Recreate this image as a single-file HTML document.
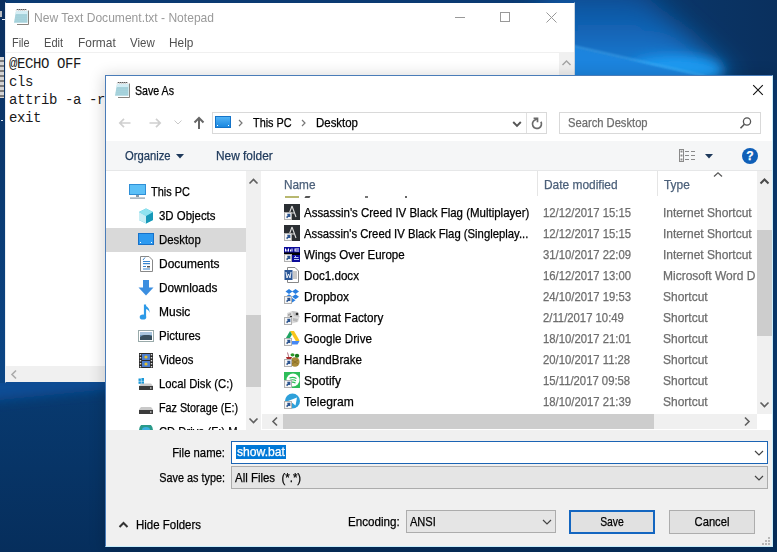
<!DOCTYPE html>
<html><head><meta charset="utf-8">
<style>
*{margin:0;padding:0;box-sizing:border-box}
html,body{width:777px;height:552px;overflow:hidden}
body{position:relative;font-family:"Liberation Sans",sans-serif;font-size:11.5px;color:#000;
background:#08306a;}
.a{position:absolute}
.t{position:absolute;white-space:nowrap;line-height:14px;-webkit-text-stroke:0.25px currentColor}

/* notepad */
#np{left:5px;top:2px;width:570px;height:381px;background:#fff;background-clip:padding-box;border:1px solid transparent;border-left-color:#e8eef4;border-right-color:#c8d4e0}
#np .title{left:28px;top:8px;color:#9a9a9a;font-size:12px;-webkit-text-stroke:0}
.menu{color:#505050;font-size:11.6px;-webkit-text-stroke:0}
.code{-webkit-text-stroke:0;font-family:"Liberation Mono",monospace;font-size:14px;letter-spacing:-0.4px;line-height:18px;color:#1a1a1a}
</style></head>
<body>
<svg id="wall" class="a" style="left:0;top:0" width="777" height="552" viewBox="0 0 777 552">
 <defs>
  <filter id="b15" x="-50%" y="-50%" width="200%" height="200%"><feGaussianBlur stdDeviation="14"/></filter>
  <filter id="b6" x="-50%" y="-50%" width="200%" height="200%"><feGaussianBlur stdDeviation="6"/></filter>
  <filter id="b1" x="-50%" y="-50%" width="200%" height="200%"><feGaussianBlur stdDeviation="1.2"/></filter>
  <linearGradient id="gtop" x1="0" y1="0" x2="1" y2="0"><stop offset="0" stop-color="#0c3f7c"/><stop offset=".5" stop-color="#0a3668"/><stop offset="1" stop-color="#0a305e"/></linearGradient>
 </defs>
 <linearGradient id="gbase" x1="0" y1="0" x2="0" y2="1"><stop offset="0" stop-color="#0a3a72"/><stop offset=".7" stop-color="#083a70"/><stop offset="1" stop-color="#062e5c"/></linearGradient><rect width="777" height="552" fill="url(#gbase)"/>
 <rect x="560" y="0" width="217" height="80" fill="url(#gtop)"/>
 <linearGradient id="gbr" x1="0" y1="0" x2="0" y2="1"><stop offset="0" stop-color="#0f4f98"/><stop offset=".5" stop-color="#1266b8"/><stop offset="1" stop-color="#1688e4"/></linearGradient>
 <polygon points="540,-10 640,-10 735,82 540,82" fill="url(#gbr)" filter="url(#b15)"/>
 <ellipse cx="675" cy="70" rx="48" ry="14" fill="#1e9cf4" filter="url(#b6)"/>
 <polygon points="560,44 700,76 560,82" fill="#1a84de" filter="url(#b1)"/>
 <path d="M560 43 L705 76" stroke="#58b8f8" stroke-width="1.4" stroke-opacity=".6" filter="url(#b1)"/>
 <polygon points="-20,375 120,375 120,388 -20,402" fill="#0c4e96" filter="url(#b6)"/>
 <linearGradient id="gleft" x1="0" y1="0" x2="0" y2="1"><stop offset="0" stop-color="#0b2f5e"/><stop offset=".5" stop-color="#0a3a72"/><stop offset="1" stop-color="#0b4686"/></linearGradient><rect x="0" y="0" width="6" height="383" fill="url(#gleft)"/>
</svg>

<div class="a" style="left:0;top:11px;width:2px;height:6px;background:#b8bcc0"></div>
<div class="a" style="left:2px;top:19px;width:3px;height:1px;background:#e8eef8"></div>
<div class="a" style="left:0;top:57px;width:4px;height:41px;background:repeating-linear-gradient(#d4d4d4 0 3px,#7a7a7a 3px 5px)"></div>
<div class="a" style="left:1px;top:120px;width:2px;height:1px;background:#dfe8f0"></div>
<!-- Notepad -->
<div id="np" class="a">
  <!-- icon -->
  <svg class="a" style="left:5px;top:4px" width="18" height="18" viewBox="0 0 18 18">
  <path d="M6 3.5 H17.5 V17.5 H6 Z" fill="#fff"/><path d="M6 17.5 H17.5 V3.5" fill="none" stroke="#7a7670" stroke-width="0.9"/>
  <path d="M5 4 L16.5 4 L16.5 15.8 L3 15.8 Z" fill="#a6d3dc"/>
  <path d="M5 4 L16.5 4 L16.5 7 L4.6 7 Z" fill="#d4edf4"/>
  <g stroke="#a4cdd9" stroke-width=".5"><path d="M4.5 8.5 H16 M4.2 10.5 H16 M3.9 12.5 H16 M3.6 14.5 H16"/></g>
  <path d="M5.5 3.2 l1 -1 l1 1 l1 -1 l1 1 l1 -1 l1 1 l1 -1 l1 1 l1 -1 l1 1" fill="none" stroke="#333" stroke-width="1"/>
</svg>
  <div class="t title" style="font-size:12.2px;transform:scaleX(0.9890);transform-origin:0 0">New Text Document.txt - Notepad</div>
  <div class="a" style="left:449px;top:14px;width:10px;height:1px;background:#999"></div>
  <div class="a" style="left:494px;top:9px;width:10px;height:10px;border:1px solid #999"></div>
  <svg class="a" style="left:540px;top:9px" width="11" height="11"><path d="M0.5 0.5 L10.5 10.5 M10.5 0.5 L0.5 10.5" stroke="#999" stroke-width="1"/></svg>
  <div class="t menu" style="left:6px;top:33px;font-size:12.2px;transform:scaleX(0.8961);transform-origin:0 0">File</div>
  <div class="t menu" style="left:38px;top:33px;font-size:12.2px;transform:scaleX(0.9088);transform-origin:0 0">Edit</div>
  <div class="t menu" style="left:72px;top:33px;font-size:12.2px;transform:scaleX(0.9764);transform-origin:0 0">Format</div>
  <div class="t menu" style="left:124px;top:33px;font-size:12.2px;transform:scaleX(0.9426);transform-origin:0 0">View</div>
  <div class="t menu" style="left:163px;top:33px;font-size:12.2px;transform:scaleX(0.9730);transform-origin:0 0">Help</div>
  <div class="a" style="left:0;top:49px;width:568px;height:1px;background:#f0f0f0"></div>
  <div class="t code" style="left:3px;top:52px">@ECHO OFF<br>cls<br>attrib -a -r<br>exit</div>
  <!-- v scrollbar -->
  <div class="a" style="left:553px;top:50px;width:15px;height:314px;background:#f0f0f0"></div>
  <svg class="a" style="left:555px;top:56px" width="11" height="8"><path d="M1.5 6 L5.5 2 L9.5 6" stroke="#a3a3a3" stroke-width="1.4" fill="none"/></svg>
  <!-- h scrollbar -->
  <div class="a" style="left:0;top:363px;width:568px;height:16px;background:#f0f0f0"></div>
  <svg class="a" style="left:4px;top:366px" width="8" height="11"><path d="M6 1.5 L2 5.5 L6 9.5" stroke="#ababab" stroke-width="1.6" fill="none"/></svg>
</div>


<!-- Save As dialog -->
<div class="a" style="left:105px;top:75px;width:668px;height:472px;background:#fff;border:1px solid #4a7cb8;border-right-color:#c8eefc;border-bottom-color:#c8eefc;box-shadow:0 2px 14px 2px rgba(0,0,0,.16)"></div>
<svg class="a" style="left:112px;top:80px" width="18" height="18" viewBox="0 0 18 18">
  <path d="M6 3.5 H17.5 V17.5 H6 Z" fill="#fff"/><path d="M6 17.5 H17.5 V3.5" fill="none" stroke="#7a7670" stroke-width="0.9"/>
  <path d="M5 4 L16.5 4 L16.5 15.8 L3 15.8 Z" fill="#a6d3dc"/>
  <path d="M5 4 L16.5 4 L16.5 7 L4.6 7 Z" fill="#d4edf4"/>
  <g stroke="#a4cdd9" stroke-width=".5"><path d="M4.5 8.5 H16 M4.2 10.5 H16 M3.9 12.5 H16 M3.6 14.5 H16"/></g>
  <path d="M5.5 3.2 l1 -1 l1 1 l1 -1 l1 1 l1 -1 l1 1 l1 -1 l1 1 l1 -1 l1 1" fill="none" stroke="#333" stroke-width="1"/>
</svg>
<div class="t" style="left:135px;top:84px;color:#000;font-size:12.2px;transform:scaleX(0.8721);transform-origin:0 0">Save As</div>
<svg class="a" style="left:752px;top:84px" width="12" height="12"><path d="M1.2 1.2 L10.8 10.8 M10.8 1.2 L1.2 10.8" stroke="#111" stroke-width="1.1"/></svg>

<!-- nav buttons -->
<svg class="a" style="left:118px;top:117px" width="14" height="12"><path d="M1.8 6 H12.5 M6 1.8 L1.8 6 L6 10.2" stroke="#cfcfcf" stroke-width="1.7" fill="none"/></svg>
<svg class="a" style="left:148px;top:117px" width="14" height="12"><path d="M1.5 6 H12.2 M8 1.8 L12.2 6 L8 10.2" stroke="#cfcfcf" stroke-width="1.7" fill="none"/></svg>
<svg class="a" style="left:174px;top:120px" width="8" height="5"><path d="M0.5 0.5 L4 4 L7.5 0.5" stroke="#c9c9c9" stroke-width="1" fill="none"/></svg>
<svg class="a" style="left:193px;top:116px" width="12" height="14"><path d="M6 2 V13 M1.5 6.5 L6 2 L10.5 6.5" stroke="#666" stroke-width="2" fill="none"/></svg>

<!-- address bar -->
<div class="a" style="left:212px;top:112px;width:335px;height:22px;border:1px solid #d9d9d9;background:#fff"></div>
<div class="a" style="left:215px;top:116px;width:16px;height:12px;background:linear-gradient(#52b3f5,#1a87e0);border:1px solid #1473c8"></div>
<div class="a" style="left:217px;top:125px;width:1px;height:1px;background:#fff"></div>
<div class="a" style="left:228px;top:125px;width:1px;height:1px;background:#fff"></div>
<svg class="a" style="left:238px;top:119px" width="5" height="8"><path d="M1 1 L4 4 L1 7" stroke="#777" stroke-width="1.2" fill="none"/></svg>
<div class="t" style="left:253px;top:116px;font-size:12.2px;transform:scaleX(0.8906);transform-origin:0 0">This PC</div>
<svg class="a" style="left:301px;top:119px" width="5" height="8"><path d="M1 1 L4 4 L1 7" stroke="#777" stroke-width="1.2" fill="none"/></svg>
<div class="t" style="left:316px;top:116px;font-size:12.2px;transform:scaleX(0.9392);transform-origin:0 0">Desktop</div>
<svg class="a" style="left:512px;top:120px" width="10" height="8"><path d="M1.2 2 L5 5.8 L8.8 2" stroke="#555" stroke-width="1.9" fill="none"/></svg>
<div class="a" style="left:526px;top:113px;width:1px;height:20px;background:#e0e0e0"></div>
<svg class="a" style="left:529px;top:116px" width="16" height="16" viewBox="0 0 16 16"><path d="M11.9 5.75 A4.5 4.5 0 1 1 6 3.9 L8.3 2.5" stroke="#6a6a6a" stroke-width="1.7" fill="none"/><path d="M4.6 2.3 H8.5 V6.2" stroke="#6a6a6a" stroke-width="1.7" fill="none"/></svg>

<!-- search -->
<div class="a" style="left:559px;top:112px;width:202px;height:22px;border:1px solid #d9d9d9;background:#fff"></div>
<div class="t" style="left:568px;top:116px;color:#6d6d6d;font-size:12.2px;transform:scaleX(0.9179);transform-origin:0 0">Search Desktop</div>
<svg class="a" style="left:739px;top:116px" width="14" height="14" viewBox="0 0 14 14"><circle cx="8" cy="5.5" r="3.6" stroke="#555" stroke-width="1.3" fill="none"/><path d="M5.4 8.2 L1.5 12.2" stroke="#555" stroke-width="1.6"/></svg>

<!-- command bar -->
<div class="a" style="left:106px;top:141px;width:666px;height:30px;background:#f5f6f7;border-bottom:1px solid #e6e7e8"></div>
<div class="t" style="left:125px;top:149px;color:#1e395b;font-size:12.2px;transform:scaleX(0.9221);transform-origin:0 0">Organize</div>
<svg class="a" style="left:176px;top:154px" width="8" height="5"><path d="M0 0 H8 L4 4.5 Z" fill="#1e395b"/></svg>
<div class="t" style="left:216px;top:149px;color:#1e395b;font-size:12.2px;transform:scaleX(0.9748);transform-origin:0 0">New folder</div>
<svg class="a" style="left:679px;top:149px" width="17" height="13" viewBox="0 0 17 13">
 <rect x="0.5" y="0.5" width="4" height="12" fill="#fff" stroke="#8a8a8a"/>
 <g fill="#8a8a8a"><rect x="1.5" y="1.5" width="2" height="2"/><rect x="1.5" y="5.5" width="2" height="2"/><rect x="1.5" y="9.5" width="2" height="2"/>
 <rect x="6" y="2" width="4" height="1"/><rect x="6" y="6" width="4" height="1"/><rect x="6" y="10" width="4" height="1"/><rect x="12" y="2" width="4" height="1"/><rect x="12" y="6" width="4" height="1"/><rect x="12" y="10" width="4" height="1"/></g>
</svg>
<svg class="a" style="left:705px;top:154px" width="8" height="5"><path d="M0 0 H8 L4 4.5 Z" fill="#1e395b"/></svg>
<div class="a" style="left:742px;top:148px;width:16px;height:16px;border-radius:50%;background:#0f5fb8"></div>
<div class="t" style="left:742px;top:149px;width:16px;text-align:center;color:#fff;font-weight:bold;font-size:12px">?</div>
<div class="a" style="left:106px;top:171px;width:140px;height:259px;background:#fff"></div>
<div class="a" style="left:246px;top:171px;width:15px;height:259px;background:#f0f0f0"></div>
<div class="a" style="left:246px;top:315px;width:15px;height:72px;background:#cdcdcd"></div>
<svg class="a" style="left:248px;top:177px" width="11" height="8"><path d="M1.5 6.5 L5.5 2.5 L9.5 6.5" stroke="#606060" stroke-width="1.6" fill="none"/></svg>
<svg class="a" style="left:248px;top:417px" width="11" height="8"><path d="M1.5 1.5 L5.5 5.5 L9.5 1.5" stroke="#606060" stroke-width="1.6" fill="none"/></svg>
<div class="a" style="left:106px;top:228px;width:140px;height:24px;background:#d9d9d9"></div>
<div class="t" style="left:151px;top:185px;font-size:12.2px;transform:scaleX(0.8952);transform-origin:0 0">This PC</div>
<div class="t" style="left:159px;top:209px;font-size:12.2px;transform:scaleX(0.9370);transform-origin:0 0">3D Objects</div>
<div class="t" style="left:159px;top:233px;font-size:12.2px;transform:scaleX(0.9347);transform-origin:0 0">Desktop</div>
<div class="t" style="left:159px;top:257px;font-size:12.2px;transform:scaleX(0.9815);transform-origin:0 0">Documents</div>
<div class="t" style="left:159px;top:281px;font-size:12.2px;transform:scaleX(0.9685);transform-origin:0 0">Downloads</div>
<div class="t" style="left:159px;top:305px;font-size:12.2px;transform:scaleX(0.9834);transform-origin:0 0">Music</div>
<div class="t" style="left:159px;top:329px;font-size:12.2px;transform:scaleX(0.9448);transform-origin:0 0">Pictures</div>
<div class="t" style="left:159px;top:353px;font-size:12.2px;transform:scaleX(0.9259);transform-origin:0 0">Videos</div>
<div class="t" style="left:159px;top:377px;font-size:12.2px;transform:scaleX(0.9272);transform-origin:0 0">Local Disk (C:)</div>
<div class="t" style="left:159px;top:401px;font-size:12.2px;transform:scaleX(0.8835);transform-origin:0 0">Faz Storage (E:)</div>
<div class="t" style="left:159px;top:425px;font-size:12.2px;transform:scaleX(0.9200);transform-origin:0 0">CD Drive (F:) M</div>
<svg class="a" style="left:129px;top:184px" width="18" height="16" viewBox="0 0 18 16"><rect x="0.5" y="0.5" width="16" height="10" fill="#5cc0f7" stroke="#2f8fd6"/><rect x="7" y="11" width="3" height="2" fill="#8a9aa8"/><rect x="1" y="13.5" width="15" height="1.2" fill="#8a9aa8"/></svg>
<svg class="a" style="left:138px;top:208px" width="16" height="16" viewBox="0 0 16 16"><path d="M8 0.5 L15 4 L15 12 L8 15.5 L1 12 L1 4 Z" fill="#39c0d8"/><path d="M8 8 L15 4 L15 12 L8 15.5 Z" fill="#1798b8"/><path d="M1 4 L8 8 L15 4 L8 0.5 Z" fill="#8fe3f0"/><path d="M1 4 L8 8 L8 15.5 L1 12 Z" fill="#c7eef5"/></svg>
<svg class="a" style="left:138px;top:233px" width="16" height="14" viewBox="0 0 16 14"><rect x="0.5" y="0.5" width="15" height="11" fill="#2d9af0" stroke="#1771c9"/><rect x="2" y="9" width="1" height="1" fill="#fff"/><rect x="13" y="9" width="1" height="1" fill="#fff"/></svg>
<svg class="a" style="left:140px;top:256px" width="13" height="16" viewBox="0 0 13 16"><path d="M0.5 0.5 H9 L12.5 4 V15.5 H0.5 Z" fill="#fff" stroke="#888"/><g fill="#3a86d0"><rect x="3" y="5" width="7" height="1"/><rect x="3" y="7" width="7" height="1.2"/><rect x="3" y="10" width="3" height="1"/><rect x="7" y="10" width="3" height="1.5" fill="#555"/><rect x="3" y="12.5" width="7" height="1"/></g><path d="M3 4 L5 1.5" stroke="#3a86d0"/></svg>
<svg class="a" style="left:138px;top:280px" width="16" height="16" viewBox="0 0 16 16"><path d="M5 0 H11 V7.5 H15.5 L8 15.5 L0.5 7.5 H5 Z" fill="#3b8ee0"/></svg>
<svg class="a" style="left:139px;top:304px" width="14" height="16" viewBox="0 0 14 16"><path d="M6 0.5 L6 12" stroke="#2d9ae8" stroke-width="2.2"/><ellipse cx="4" cy="13" rx="3.3" ry="2.6" fill="#2d9ae8"/><path d="M6 1 C8 3 11 4 10.5 9 C10 6 8 5 6.5 5" fill="#2d9ae8"/></svg>
<svg class="a" style="left:138px;top:330px" width="16" height="12" viewBox="0 0 16 12"><rect x="0.5" y="0.5" width="15" height="11" fill="#fff" stroke="#9aa"/><rect x="2" y="2" width="12" height="8" fill="#6a94b8"/><path d="M2 7 Q7 3 14 6 V10 H2 Z" fill="#38505e"/><rect x="2" y="2" width="12" height="3" fill="#a8c4dc"/></svg>
<svg class="a" style="left:139px;top:353px" width="14" height="15" viewBox="0 0 14 15"><rect x="0" y="0" width="14" height="15" fill="#2a2a2a"/><rect x="3" y="1" width="8" height="6" fill="#4c7ed0"/><rect x="3" y="8" width="8" height="6" fill="#4c7ed0"/><circle cx="7" cy="4" r="1.6" fill="#e0c030"/><circle cx="7" cy="11" r="1.6" fill="#e0c030"/><g fill="#ddd"><rect x="0.8" y="1" width="1.4" height="1.4"/><rect x="0.8" y="4" width="1.4" height="1.4"/><rect x="0.8" y="7" width="1.4" height="1.4"/><rect x="0.8" y="10" width="1.4" height="1.4"/><rect x="0.8" y="13" width="1.4" height="1.4"/><rect x="11.8" y="1" width="1.4" height="1.4"/><rect x="11.8" y="4" width="1.4" height="1.4"/><rect x="11.8" y="7" width="1.4" height="1.4"/><rect x="11.8" y="10" width="1.4" height="1.4"/><rect x="11.8" y="13" width="1.4" height="1.4"/></g></svg>
<svg class="a" style="left:138px;top:377px" width="16" height="14" viewBox="0 0 16 14"><g fill="#1a98d8"><rect x="0.5" y="1.5" width="2.4" height="2.4"/><rect x="3.4" y="1" width="2.6" height="2.9"/><rect x="0.5" y="4.4" width="2.4" height="2.4"/><rect x="3.4" y="4.4" width="2.6" height="2.6"/></g><path d="M3 6.5 H13 L15 9 V13 H1 V9 Z" fill="#c9c9c9"/><rect x="1" y="9" width="14" height="4" fill="#3b3b3b"/><rect x="12" y="10.5" width="1.5" height="1" fill="#fff"/></svg>
<svg class="a" style="left:138px;top:401px" width="16" height="14" viewBox="0 0 16 14"><path d="M3 6 H13 L15 8.5 V13 H1 V8.5 Z" fill="#c9c9c9"/><rect x="1" y="9" width="14" height="4" fill="#3b3b3b"/><rect x="12" y="10.5" width="1.5" height="1" fill="#fff"/></svg>
<svg class="a" style="left:138px;top:425px" width="16" height="5" viewBox="0 0 16 5"><path d="M1 5 A7 7 0 0 1 15 5 Z" fill="#2a9a8a"/><path d="M4 5 A4 3 0 0 1 12 5 Z" fill="#3cb0e0"/></svg>
<div class="a" style="left:261px;top:171px;width:496px;height:243px;background:#fff"></div>

<div class="a" style="left:262px;top:171px;width:495px;height:26px;background:#fff"></div>
<div class="t" style="left:284px;top:178px;color:#4c607a;font-size:12.2px;transform:scaleX(0.9688);transform-origin:0 0">Name</div>
<div class="a" style="left:537px;top:171px;width:1px;height:26px;background:#e5e5e5"></div>
<div class="t" style="left:544px;top:178px;color:#4c607a;font-size:12.2px;transform:scaleX(0.9787);transform-origin:0 0">Date modified</div>
<div class="a" style="left:657px;top:171px;width:1px;height:26px;background:#e5e5e5"></div>
<div class="t" style="left:664px;top:178px;color:#4c607a;font-size:12.2px;transform:scaleX(0.9765);transform-origin:0 0">Type</div>
<div class="a" style="left:262px;top:196px;width:495px;height:3px;overflow:hidden;background:#fff"><div class="a" style="left:43px;top:0;width:5px;height:2px;background:#555;transform:skewX(-30deg)"></div><div class="a" style="left:103px;top:0;width:3px;height:2px;background:#777"></div><div class="a" style="left:143px;top:0;width:2px;height:2px;background:#666"></div><div class="a" style="left:24px;top:1px;width:1px;height:0"></div><div class="a" style="left:23px;top:0;width:14px;height:2px;background:#b8b870"></div></div>
<svg class="a" style="left:713px;top:171px" width="10" height="7"><path d="M1 5.5 L5 1.8 L9 5.5" stroke="#5a5a5a" stroke-width="1.3" fill="none"/></svg>
<div class="t" style="left:304px;top:206px;font-size:12.2px;transform:scaleX(0.9411);transform-origin:0 0">Assassin's Creed IV Black Flag (Multiplayer)</div>
<div class="t" style="left:543px;top:206px;color:#6d6d6d;font-size:12.2px;transform:scaleX(0.9274);transform-origin:0 0">12/12/2017 15:15</div>
<div class="t" style="left:663px;top:206px;color:#6d6d6d;width:94px;overflow:hidden;font-size:12.2px;transform:scaleX(0.9844);transform-origin:0 0">Internet Shortcut</div>
<div class="t" style="left:304px;top:227px;font-size:12.2px;transform:scaleX(0.9273);transform-origin:0 0">Assassin's Creed IV Black Flag (Singleplay...</div>
<div class="t" style="left:543px;top:227px;color:#6d6d6d;font-size:12.2px;transform:scaleX(0.9274);transform-origin:0 0">12/12/2017 15:15</div>
<div class="t" style="left:663px;top:227px;color:#6d6d6d;width:94px;overflow:hidden;font-size:12.2px;transform:scaleX(0.9844);transform-origin:0 0">Internet Shortcut</div>
<div class="t" style="left:304px;top:248px;font-size:12.2px;transform:scaleX(0.9469);transform-origin:0 0">Wings Over Europe</div>
<div class="t" style="left:543px;top:248px;color:#6d6d6d;font-size:12.2px;transform:scaleX(0.9274);transform-origin:0 0">31/10/2017 22:09</div>
<div class="t" style="left:663px;top:248px;color:#6d6d6d;width:94px;overflow:hidden;font-size:12.2px;transform:scaleX(0.9844);transform-origin:0 0">Internet Shortcut</div>
<div class="t" style="left:304px;top:269px;font-size:12.2px;transform:scaleX(0.9550);transform-origin:0 0">Doc1.docx</div>
<div class="t" style="left:543px;top:269px;color:#6d6d6d;font-size:12.2px;transform:scaleX(0.9274);transform-origin:0 0">16/12/2017 13:00</div>
<div class="t" style="left:663px;top:269px;color:#6d6d6d;width:94px;overflow:hidden;font-size:12.2px;transform:scaleX(0.9844);transform-origin:0 0">Microsoft Word D</div>
<div class="t" style="left:304px;top:290px;font-size:12.2px;transform:scaleX(0.9766);transform-origin:0 0">Dropbox</div>
<div class="t" style="left:543px;top:290px;color:#6d6d6d;font-size:12.2px;transform:scaleX(0.9274);transform-origin:0 0">24/10/2017 19:53</div>
<div class="t" style="left:663px;top:290px;color:#6d6d6d;width:94px;overflow:hidden;font-size:12.2px;transform:scaleX(0.9848);transform-origin:0 0">Shortcut</div>
<div class="t" style="left:304px;top:311px;font-size:12.2px;transform:scaleX(0.9598);transform-origin:0 0">Format Factory</div>
<div class="t" style="left:543px;top:311px;color:#6d6d6d;font-size:12.2px;transform:scaleX(0.9274);transform-origin:0 0">2/11/2017 10:49</div>
<div class="t" style="left:663px;top:311px;color:#6d6d6d;width:94px;overflow:hidden;font-size:12.2px;transform:scaleX(0.9848);transform-origin:0 0">Shortcut</div>
<div class="t" style="left:304px;top:332px;font-size:12.2px;transform:scaleX(0.9559);transform-origin:0 0">Google Drive</div>
<div class="t" style="left:543px;top:332px;color:#6d6d6d;font-size:12.2px;transform:scaleX(0.9274);transform-origin:0 0">18/10/2017 21:01</div>
<div class="t" style="left:663px;top:332px;color:#6d6d6d;width:94px;overflow:hidden;font-size:12.2px;transform:scaleX(0.9848);transform-origin:0 0">Shortcut</div>
<div class="t" style="left:304px;top:353px;font-size:12.2px;transform:scaleX(0.9511);transform-origin:0 0">HandBrake</div>
<div class="t" style="left:543px;top:353px;color:#6d6d6d;font-size:12.2px;transform:scaleX(0.9274);transform-origin:0 0">20/10/2017 11:28</div>
<div class="t" style="left:663px;top:353px;color:#6d6d6d;width:94px;overflow:hidden;font-size:12.2px;transform:scaleX(0.9848);transform-origin:0 0">Shortcut</div>
<div class="t" style="left:304px;top:374px;font-size:12.2px;transform:scaleX(0.9929);transform-origin:0 0">Spotify</div>
<div class="t" style="left:543px;top:374px;color:#6d6d6d;font-size:12.2px;transform:scaleX(0.9274);transform-origin:0 0">15/11/2017 09:58</div>
<div class="t" style="left:663px;top:374px;color:#6d6d6d;width:94px;overflow:hidden;font-size:12.2px;transform:scaleX(0.9848);transform-origin:0 0">Shortcut</div>
<div class="t" style="left:304px;top:395px;font-size:12.2px;transform:scaleX(0.9915);transform-origin:0 0">Telegram</div>
<div class="t" style="left:543px;top:395px;color:#6d6d6d;font-size:12.2px;transform:scaleX(0.9274);transform-origin:0 0">18/10/2017 21:39</div>
<div class="t" style="left:663px;top:395px;color:#6d6d6d;width:94px;overflow:hidden;font-size:12.2px;transform:scaleX(0.9848);transform-origin:0 0">Shortcut</div>
<svg class="a" style="left:284px;top:204px" width="16" height="16" viewBox="0 0 16 16"><rect width="16" height="16" fill="#2b2f33"/><path d="M8 2 L4 13 M8 2 L12 13 M6 9 H11" stroke="#ddd" stroke-width="1.1" fill="none"/><rect x="0.5" y="8.5" width="7" height="7" fill="#f6f6f6" stroke="#b0b0b0"/><path d="M2.6 13.6 L5.2 11 M3.3 10.6 H5.6 V12.9" stroke="#2d5590" stroke-width="1.5" fill="none"/></svg>

<svg class="a" style="left:284px;top:225px" width="16" height="16" viewBox="0 0 16 16"><rect width="16" height="16" fill="#2b2f33"/><path d="M8 2 L4 13 M8 2 L12 13 M6 9 H11" stroke="#ddd" stroke-width="1.1" fill="none"/><rect x="0.5" y="8.5" width="7" height="7" fill="#f6f6f6" stroke="#b0b0b0"/><path d="M2.6 13.6 L5.2 11 M3.3 10.6 H5.6 V12.9" stroke="#2d5590" stroke-width="1.5" fill="none"/></svg>

<svg class="a" style="left:284px;top:246px" width="16" height="16" viewBox="0 0 16 16"><rect y="1" width="16" height="15" fill="#0c0c9a"/><rect y="6.5" width="16" height="2.5" fill="#000"/><g fill="#fff"><rect x="1" y="2.5" width="1" height="3"/><rect x="2.5" y="3.5" width="1" height="2"/><rect x="4" y="2.5" width="1" height="3"/><rect x="6" y="3.5" width="1" height="2"/><rect x="7.5" y="2.5" width="1" height="3"/><path d="M10.5 2.5 H15 V3.5 H11.5 V4.5 H15 V5.5 H10.5 Z"/></g><path d="M10 11.5 H14.5 M11 9.5 L12 11.5 M10 13.5 H15" stroke="#c8d8ff" stroke-width=".9"/><rect x="0.5" y="8.5" width="7" height="7" fill="#f6f6f6" stroke="#b0b0b0"/><path d="M2.6 13.6 L5.2 11 M3.3 10.6 H5.6 V12.9" stroke="#2d5590" stroke-width="1.5" fill="none"/></svg>

<svg class="a" style="left:284px;top:267px" width="16" height="16" viewBox="0 0 16 16"><path d="M3.5 0.5 H11 L14.5 4 V15.5 H3.5 Z" fill="#fff" stroke="#888"/><g stroke="#777" stroke-width=".8"><path d="M9 5 H13 M9 7 H13 M9 9 H13 M9 11 H13"/></g><rect x="0.5" y="3" width="8" height="10" fill="#2b5797"/><path d="M2 5 L3 11 L4.5 7 L6 11 L7 5" stroke="#fff" stroke-width=".9" fill="none"/></svg>

<svg class="a" style="left:284px;top:288px" width="16" height="16" viewBox="0 0 16 16"><g fill="#2a7fe0"><path d="M5 1 L8.5 3.5 L5 6 L1.5 3.5 Z"/><path d="M11.5 1 L15 3.5 L11.5 6 L8 3.5 Z"/><path d="M5 6.2 L8.5 8.7 L5 11.2 L1.5 8.7 Z"/><path d="M11.5 6.2 L15 8.7 L11.5 11.2 L8 8.7 Z"/><path d="M8.2 10 L11.5 12.3 L8.2 14.6 L5 12.3 Z"/></g><rect x="0.5" y="8.5" width="7" height="7" fill="#f6f6f6" stroke="#b0b0b0"/><path d="M2.6 13.6 L5.2 11 M3.3 10.6 H5.6 V12.9" stroke="#2d5590" stroke-width="1.5" fill="none"/></svg>

<svg class="a" style="left:284px;top:309px" width="16" height="16" viewBox="0 0 16 16"><path d="M3 4 L8 2 L14 3 L15.5 8 L14 13 L8 14.5 L3 13 Z" fill="#dcdcdc"/><path d="M8 2 L14 3 L15.5 8 L10 7 Z" fill="#c4c4c4"/><circle cx="13" cy="5" r="1.3" fill="#2a2a2a"/><circle cx="7" cy="7.8" r="1.1" fill="#1a1a1a"/><path d="M9 9 L14 10 L13 13 L9 12 Z" fill="#b8b8b8"/><path d="M4 5 L7 4 V6 L4 7 Z" fill="#a8a8a8"/><rect x="0.5" y="8.5" width="7" height="7" fill="#f6f6f6" stroke="#b0b0b0"/><path d="M2.6 13.6 L5.2 11 M3.3 10.6 H5.6 V12.9" stroke="#2d5590" stroke-width="1.5" fill="none"/></svg>

<svg class="a" style="left:284px;top:330px" width="16" height="16" viewBox="0 0 16 16"><path d="M6 1 H10 L15.5 10.5 L13.5 14 Z" fill="#f8c51c"/><path d="M6 1 L0.5 10.5 L2.5 14 L8 4.5 Z" fill="#1ea362"/><path d="M4 11 H15.5 L13.5 14.5 H2.5 Z" fill="#4688f4"/><rect x="0.5" y="8.5" width="7" height="7" fill="#f6f6f6" stroke="#b0b0b0"/><path d="M2.6 13.6 L5.2 11 M3.3 10.6 H5.6 V12.9" stroke="#2d5590" stroke-width="1.5" fill="none"/></svg>

<svg class="a" style="left:284px;top:351px" width="16" height="16" viewBox="0 0 16 16"><path d="M3.5 1.5 L5 7" stroke="#b07080" stroke-width="1"/><path d="M2 6 L8 6 L6.5 9.5 L3.5 9.5 Z" fill="#a82828"/><ellipse cx="11" cy="11" rx="4.6" ry="4.8" fill="#a88a38"/><path d="M8 9 L14 13 M8 13 L14 9" stroke="#7a6020" stroke-width=".6"/><ellipse cx="8.5" cy="3.8" rx="2" ry="1.6" fill="#2a9a2a"/><ellipse cx="13" cy="4.8" rx="2.2" ry="2" fill="#1a7a1a"/><rect x="0.5" y="8.5" width="7" height="7" fill="#f6f6f6" stroke="#b0b0b0"/><path d="M2.6 13.6 L5.2 11 M3.3 10.6 H5.6 V12.9" stroke="#2d5590" stroke-width="1.5" fill="none"/></svg>

<svg class="a" style="left:284px;top:372px" width="16" height="16" viewBox="0 0 16 16"><rect width="16" height="16" fill="#2ebd59"/><circle cx="9" cy="8" r="6.5" fill="#fff"/><path d="M5.5 6 Q9 4.5 12.5 6.5 M6 8.3 Q9 7 12 8.8 M6.5 10.5 Q9 9.5 11.5 11" stroke="#2ebd59" stroke-width="1.1" fill="none"/><rect x="0.5" y="8.5" width="7" height="7" fill="#f6f6f6" stroke="#b0b0b0"/><path d="M2.6 13.6 L5.2 11 M3.3 10.6 H5.6 V12.9" stroke="#2d5590" stroke-width="1.5" fill="none"/></svg>

<svg class="a" style="left:284px;top:393px" width="16" height="16" viewBox="0 0 16 16"><circle cx="8.5" cy="8" r="7.5" fill="#2ea0da"/><path d="M4 8 L13 4.5 L11.5 12.5 L8.5 10 Z" fill="#fff"/><rect x="0.5" y="8.5" width="7" height="7" fill="#f6f6f6" stroke="#b0b0b0"/><path d="M2.6 13.6 L5.2 11 M3.3 10.6 H5.6 V12.9" stroke="#2d5590" stroke-width="1.5" fill="none"/></svg>

<div class="a" style="left:757px;top:171px;width:15px;height:243px;background:#f0f0f0"></div>
<div class="a" style="left:757px;top:230px;width:15px;height:106px;background:#cdcdcd"></div>
<svg class="a" style="left:759px;top:177px" width="11" height="8"><path d="M1.5 6.5 L5.5 2.5 L9.5 6.5" stroke="#4a4a4a" stroke-width="2" fill="none"/></svg>
<svg class="a" style="left:759px;top:401px" width="11" height="8"><path d="M1.5 1.5 L5.5 5.5 L9.5 1.5" stroke="#606060" stroke-width="1.6" fill="none"/></svg>
<div class="a" style="left:262px;top:414px;width:495px;height:15px;background:#f0f0f0"></div>
<div class="a" style="left:283px;top:414px;width:371px;height:15px;background:#cdcdcd"></div>
<svg class="a" style="left:271px;top:416px" width="8" height="11"><path d="M6 1.5 L2 5.5 L6 9.5" stroke="#606060" stroke-width="1.6" fill="none"/></svg>
<svg class="a" style="left:743px;top:416px" width="8" height="11"><path d="M2 1.5 L6 5.5 L2 9.5" stroke="#606060" stroke-width="1.6" fill="none"/></svg>
<div class="a" style="left:757px;top:414px;width:15px;height:15px;background:#fff"></div>
<div class="a" style="left:106px;top:430px;width:666px;height:116px;background:#f0f0f0"></div>
<div class="t" style="left:160px;top:446px;width:65px;text-align:right;font-size:12.2px;transform:scaleX(0.9278);transform-origin:100% 0">File name:</div>
<div class="a" style="left:231px;top:441px;width:537px;height:23px;background:#fff;border:1px solid #1b64b4"></div>
<div class="a" style="left:236px;top:445px;width:50px;height:14px;background:#0078d7"></div>
<div class="t" style="left:237px;top:445px;color:#fff;font-size:12.2px;transform:scaleX(0.9977);transform-origin:0 0">show.bat</div>
<svg class="a" style="left:754px;top:450px" width="10" height="6"><path d="M1 1 L5 5 L9 1" stroke="#444" stroke-width="1.2" fill="none"/></svg>
<div class="t" style="left:150px;top:471px;width:75px;text-align:right;font-size:12.2px;transform:scaleX(0.8895);transform-origin:100% 0">Save as type:</div>
<div class="a" style="left:231px;top:466px;width:537px;height:23px;background:#e5e5e5;border:1px solid #acacac"></div>
<div class="t" style="left:235px;top:471px;font-size:12.2px;transform:scaleX(0.9398);transform-origin:0 0">All Files&nbsp; (*.*)</div>
<svg class="a" style="left:754px;top:475px" width="10" height="6"><path d="M1 1 L5 5 L9 1" stroke="#444" stroke-width="1.2" fill="none"/></svg>
<svg class="a" style="left:118px;top:521px" width="11" height="7"><path d="M1.5 6 L5.5 2 L9.5 6" stroke="#333" stroke-width="2" fill="none"/></svg>
<div class="t" style="left:136px;top:518px;font-size:12.2px;transform:scaleX(0.9408);transform-origin:0 0">Hide Folders</div>
<div class="t" style="left:348px;top:515px;font-size:12.2px;transform:scaleX(0.9554);transform-origin:0 0">Encoding:</div>
<div class="a" style="left:406px;top:510px;width:150px;height:23px;background:#e5e5e5;border:1px solid #acacac"></div>
<div class="t" style="left:410px;top:515px;font-size:12.2px;transform:scaleX(0.9068);transform-origin:0 0">ANSI</div>
<svg class="a" style="left:542px;top:519px" width="10" height="6"><path d="M1 1 L5 5 L9 1" stroke="#444" stroke-width="1.2" fill="none"/></svg>
<div class="a" style="left:569px;top:510px;width:86px;height:24px;background:#e1e1e1;border:2px solid #1466c0"></div>
<div class="t" style="left:569px;top:515px;width:86px;text-align:center;font-size:12.2px;transform:scaleX(0.8531);transform-origin:50% 0">Save</div>
<div class="a" style="left:669px;top:510px;width:86px;height:24px;background:#e1e1e1;border:1px solid #adadad"></div>
<div class="t" style="left:669px;top:515px;width:86px;text-align:center;font-size:12.2px;transform:scaleX(0.9199);transform-origin:50% 0">Cancel</div>
<svg class="a" style="left:760px;top:537px" width="11" height="11"><g fill="#b8b8b8"><rect x="8" y="0" width="2" height="2"/><rect x="5" y="3" width="2" height="2"/><rect x="8" y="3" width="2" height="2"/><rect x="2" y="6" width="2" height="2"/><rect x="5" y="6" width="2" height="2"/><rect x="8" y="6" width="2" height="2"/></g></svg>
</body></html>
